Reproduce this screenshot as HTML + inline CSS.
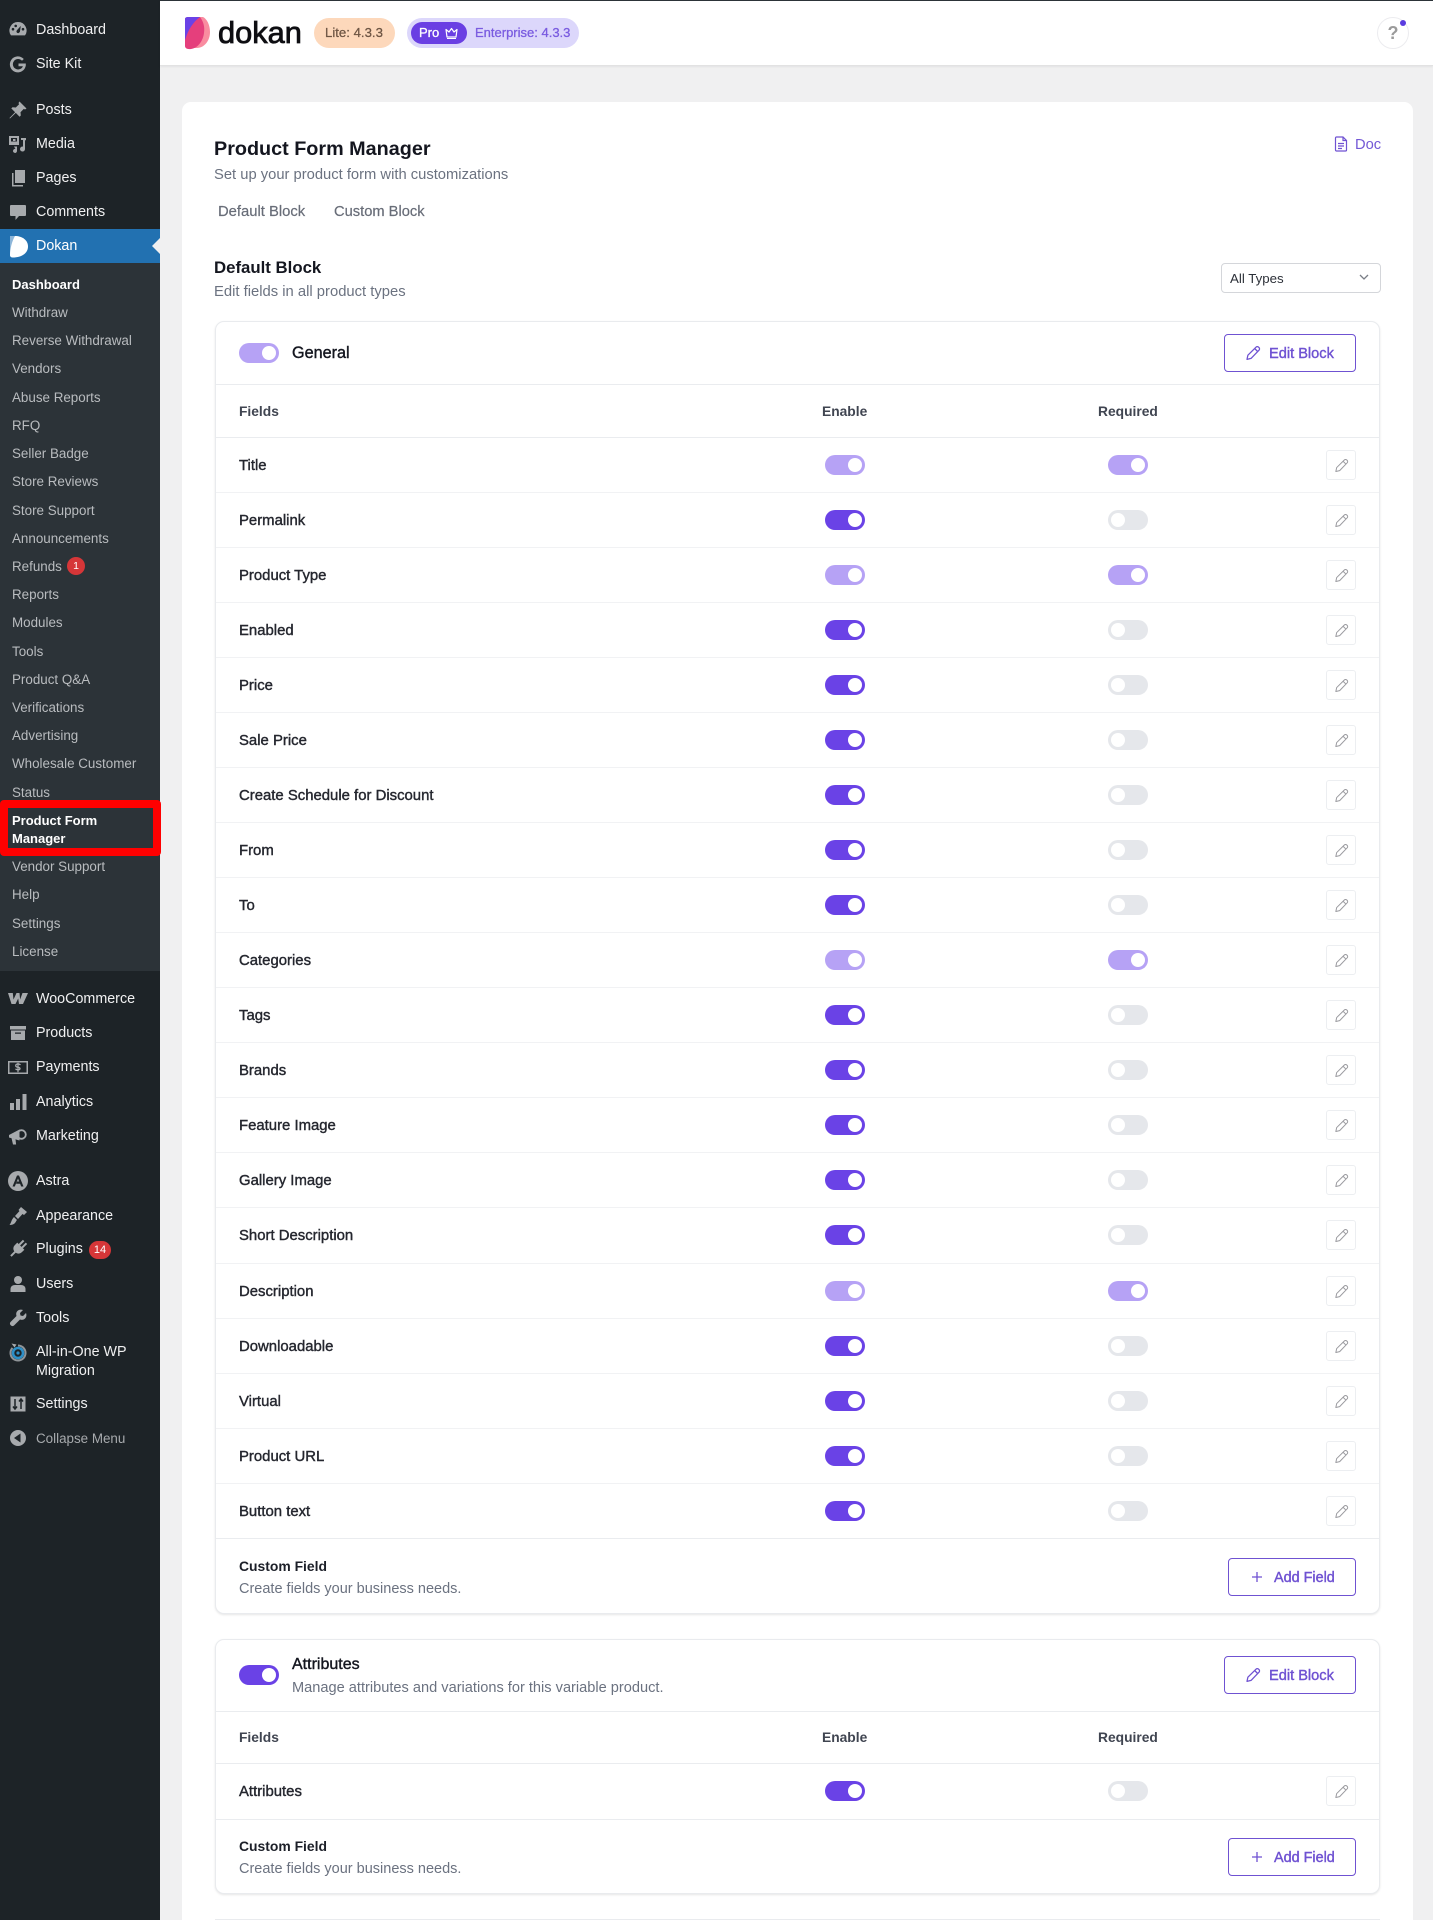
<!DOCTYPE html>
<html lang="en">
<head>
<meta charset="utf-8">
<title>Product Form Manager</title>
<style>
html,body{margin:0;padding:0;width:1433px;height:1920px;overflow:hidden}
body{background:#f0f0f1;font-family:"Liberation Sans",sans-serif;color:#1f2430}
#root{position:relative;width:1433px;height:1920px;overflow:hidden}
.x{position:absolute;white-space:nowrap;line-height:20px}
.bx{position:absolute;box-sizing:border-box}
#side{position:absolute;left:0;top:0;width:160px;height:1920px;background:#1d2327}
#sub{position:absolute;left:0;top:263px;width:160px;height:708px;background:#2c3338}
.m{position:absolute;left:36px;white-space:nowrap;line-height:21px;font-size:14.3px;color:#f0f0f1}
.s{position:absolute;left:12px;white-space:nowrap;line-height:21px;font-size:13.4px;color:#b9bcbf}
.s b{color:#fff}
.ic{position:absolute;left:8px;width:20px;height:20px;fill:#a7aaad}
.r{position:absolute;left:216px;width:1163px;height:55px;box-sizing:border-box;border-top:1px solid #f1f2f4}
.r span{position:absolute;left:23px;top:18px;line-height:20px;font-size:14.9px;color:#25272f;-webkit-text-stroke:.4px #25272f;white-space:nowrap}
.r i:nth-of-type(1){left:609px;top:17px}
.r i:nth-of-type(2){left:892px;top:17px}
.r em{position:absolute;left:1110px;top:12px;width:30px;height:30px;box-sizing:border-box;border:1px solid #eceef1;border-radius:3px}
.r em svg{position:absolute;left:6px;top:6px;width:17px;height:17px}
i.t{position:absolute;display:block;width:40px;height:20px;border-radius:10px}
i.t::after{content:"";position:absolute;top:3px;left:23px;width:14px;height:14px;border-radius:50%;background:#fff}
i.a{background:#6a42e6}
i.b{background:#b6a2f5}
i.c{background:#e5e7eb}
i.c::after{left:3px}
.card{position:absolute;left:215px;width:1165px;box-sizing:border-box;border:1px solid #e9ebee;border-radius:9px;background:#fff;box-shadow:0 1px 2px rgba(0,0,0,.1)}
.ln{position:absolute;left:216px;width:1163px;height:1px;background:#eaecef}
.btn{position:absolute;box-sizing:border-box;border:1.5px solid #6f52d2;border-radius:4px;background:#fff}
.pv{color:#6f52d2;font-size:14.6px;-webkit-text-stroke:.4px #6f52d2}
.fh{font-size:13.8px;font-weight:bold;color:#404551}
.cf{font-size:13.9px;font-weight:bold;color:#1c1f28}
.gr{font-size:14.5px;color:#6b7280}
</style>
</head>
<body>
<div id="root">
<svg width="0" height="0" style="position:absolute">
<symbol id="p" viewBox="0 0 24 24"><path d="M4 20.5l1.2-5.6L16 4.2a2.4 2.4 0 0 1 3.4 0l.6.6a2.4 2.4 0 0 1 0 3.4L9.4 19.2zM14.2 6l4 4" fill="none" stroke="#9a9a9f" stroke-width="1.4" stroke-linejoin="round"/></symbol>
<symbol id="q" viewBox="0 0 24 24"><path d="M4 20.5l1.2-5.6L16 4.2a2.4 2.4 0 0 1 3.4 0l.6.6a2.4 2.4 0 0 1 0 3.4L9.4 19.2zM14.2 6l4 4" fill="none" stroke="#6f52d2" stroke-width="1.7" stroke-linejoin="round"/></symbol>
</svg>

<!-- SIDEBAR -->
<div id="side"></div>
<div id="sub"></div>
<div class="bx" style="left:0;top:229px;width:160px;height:34px;background:#2271b1"></div>
<div class="bx" style="left:152px;top:238px;width:0;height:0;border-top:8px solid transparent;border-bottom:8px solid transparent;border-right:8px solid #f0f0f1"></div>

<svg class="ic" style="top:20px" viewBox="0 0 20 20"><path d="M10 2a8.500 8.500 0 0 0-7 13.400h14A8.500 8.500 0 0 0 10 2zM5 10.500a1.300 1.300 0 1 1 0-2.600 1.300 1.300 0 0 1 0 2.600zm2.700-3.300a1.300 1.300 0 1 1 0-2.600 1.300 1.300 0 0 1 0 2.600zM10.800 13a1.700 1.700 0 0 1-2-2.600l4-4.500-.9 6zM15 10.500a1.300 1.300 0 1 1 0-2.600 1.300 1.300 0 0 1 0 2.600z" fill-rule="evenodd"/></svg>
<svg class="ic" style="top:54px" viewBox="0 0 20 20"><path d="M15.800 5a8 8 0 1 0 2 6.500V9.500h-7.300v2.700h4.400A5.200 5.200 0 1 1 14 6.800z"/></svg>
<svg class="ic" style="top:100px" viewBox="0 0 20 20"><path d="M11.500 1.500l7 7-1.500 1-1.200-.6-3.300 3.300.3 3.300-1.200 1.200-3.800-3.800L2 18.500l-.5-.5 5.600-5.800L3.300 8.400l1.200-1.200 3.300.3 3.300-3.300-.6-1.200z"/></svg>
<svg class="ic" style="top:134px" viewBox="0 0 20 20"><path d="M1 2h10v9H1zM3 4v3.500h6V4zM5 5h2.500v2H5z" fill-rule="evenodd"/><path d="M13 4h5v2l-1 .5V15a2.500 2.500 0 1 1-2-2.400V6h-2zM6 12.500h3v4.500a2 2 0 1 1-1.500-2z"/></svg>
<svg class="ic" style="top:168px" viewBox="0 0 20 20"><path d="M7 2h10v13H7z"/><path d="M4 5h1.500v12H15v1.500H4z"/></svg>
<svg class="ic" style="top:202px" viewBox="0 0 20 20"><path d="M3 3h14a1 1 0 0 1 1 1v9a1 1 0 0 1-1 1h-6l-3.500 4v-4H3a1 1 0 0 1-1-1V4a1 1 0 0 1 1-1z"/></svg>
<svg class="ic" style="top:235px;left:9px;width:20px;height:23px" viewBox="0 0 20 23"><path d="M1 1h5l3 14-8 6z" fill="#8db6d9"/><path d="M6 1c7 0 13 4 13 10.500S13 22.500 3.500 22.500C1.500 22.500 1 21 1 20c0-6 2-14 5-19z" fill="#fff"/></svg>

<svg class="ic" style="top:989px" viewBox="0 0 20 20"><path d="M0 4h4.800l.7 6.500L8.500 4h3l.6 6.500L14.500 4H20l-5 11h-4l-.8-5.500L7.500 15h-4z"/></svg>
<svg class="ic" style="top:1023px" viewBox="0 0 20 20"><path d="M2 3h16v3.500H2zM3 7.500h14V17H3zM7 9.500v1.300h6V9.500z" fill-rule="evenodd"/></svg>
<svg class="ic" style="top:1057px" viewBox="0 0 20 20"><path d="M0 4h20v13H0zM1.500 5.500v10h17v-10z" fill-rule="evenodd"/><path d="M12.500 8c-.5-.6-1.400-1-2.500-1-1.400 0-2.300.7-2.300 1.700 0 2.200 4.300 1 4.300 2.900 0 .7-.8 1.200-2 1.200-1 0-2-.4-2.500-1" fill="none" stroke="#a7aaad" stroke-width="1.300"/><path d="M9.400 5.800h1.200v9.400H9.400z"/></svg>
<svg class="ic" style="top:1092px" viewBox="0 0 20 20"><path d="M2 11h4v7H2zM8 7h4v11H8zM14.500 2h4v16h-4z"/></svg>
<svg class="ic" style="top:1126px" viewBox="0 0 20 20"><path d="M1 9L11.500 3.500v11L1 11.500z"/><path d="M3.500 12l4 1.200.6 5.300H5z"/><circle cx="13.500" cy="8.500" r="4.300" fill="none" stroke="#a7aaad" stroke-width="1.800"/></svg>
<svg class="ic" style="top:1171px" viewBox="0 0 20 20"><path d="M10 0a10 10 0 1 0 0 20 10 10 0 0 0 0-20zM9 4.500h2l4.500 11h-2.300l-1.100-2.800H8l1-2.200h2.200L10 7.500 6.800 15.500H4.500z" fill-rule="evenodd"/></svg>
<svg class="ic" style="top:1206px" viewBox="0 0 20 20"><path d="M13 1l6 5-3 3-1.500-1L10 13 7 10l4.500-5-1-1zM6 11l3 3c-1 1-1 2-2.500 3.500-1.500 1.200-3.500 1.500-5 1.500 1-1.500 1.500-2.500 2-4s1.500-3 2.500-4z"/></svg>
<svg class="ic" style="top:1239px" viewBox="0 0 20 20"><g transform="rotate(45 10 10)"><path d="M7 0h2v6H7zM11 0h2v6h-2zM5 6h10v3.500c0 2.700-2 4.500-4 4.700V20H9v-5.800c-2-.2-4-2-4-4.700z"/></g></svg>
<svg class="ic" style="top:1274px" viewBox="0 0 20 20"><circle cx="10" cy="6" r="4"/><path d="M2.500 18v-3c0-2.500 2-4 4.500-4h6c2.500 0 4.500 1.500 4.500 4v3z"/></svg>
<svg class="ic" style="top:1308px" viewBox="0 0 20 20"><path d="M18 5l-3 3-2.500-.5L12 5l3-3c-2.500-1-5 0-6 1.500-1 1.300-1 3-.5 4.500L2.500 14a2.500 2.500 0 0 0 3.500 3.500L12 11.500c1.500.5 3.200.5 4.500-.5C18 10 19 7.500 18 5z"/></svg>
<svg class="ic" style="top:1342px" viewBox="0 0 20 20"><path d="M10 3.500a7.500 7.500 0 1 1-5.500 2.400" fill="none" stroke="#8f9498" stroke-width="2"/><path d="M3.500 1.500l5 1-2 3z"/><circle cx="10" cy="11" r="5" fill="none" stroke="#2d8fc7" stroke-width="2.600"/><circle cx="10" cy="11" r="1.600" fill="#2d8fc7"/></svg>
<svg class="ic" style="top:1394px" viewBox="0 0 20 20"><path d="M2.500 2.500h15v15h-15z"/><path d="M7 5v10M5 12.500L7 15l2-2.500M13 15V5M11 7.500L13 5l2 2.500" fill="none" stroke="#1d2327" stroke-width="1.500"/></svg>
<svg class="ic" style="top:1428px" viewBox="0 0 20 20"><path d="M10 2a8 8 0 1 0 0 16 8 8 0 0 0 0-16zm2.500 3.500v9L6 10z" fill-rule="evenodd"/></svg>

<div class="m" style="top:20px">Dashboard</div>
<div class="m" style="top:54px">Site Kit</div>
<div class="m" style="top:100px">Posts</div>
<div class="m" style="top:134px">Media</div>
<div class="m" style="top:168px">Pages</div>
<div class="m" style="top:202px">Comments</div>
<div class="m" style="top:236px;color:#fff">Dokan</div>

<div class="s" style="top:274px"><b style="font-size:13px">Dashboard</b></div>
<div class="s" style="top:302px">Withdraw</div>
<div class="s" style="top:330px">Reverse Withdrawal</div>
<div class="s" style="top:358px">Vendors</div>
<div class="s" style="top:387px">Abuse Reports</div>
<div class="s" style="top:415px">RFQ</div>
<div class="s" style="top:443px">Seller Badge</div>
<div class="s" style="top:471px">Store Reviews</div>
<div class="s" style="top:500px">Store Support</div>
<div class="s" style="top:528px">Announcements</div>
<div class="s" style="top:556px">Refunds</div>
<div class="bx" style="left:67px;top:557px;width:18px;height:18px;border-radius:50%;background:#d63638;color:#fff;font-size:10.500px;line-height:18px;text-align:center">1</div>
<div class="s" style="top:584px">Reports</div>
<div class="s" style="top:612px">Modules</div>
<div class="s" style="top:641px">Tools</div>
<div class="s" style="top:669px">Product Q&amp;A</div>
<div class="s" style="top:697px">Verifications</div>
<div class="s" style="top:725px">Advertising</div>
<div class="s" style="top:753px">Wholesale Customer</div>
<div class="s" style="top:782px">Status</div>
<div class="s" style="top:810px"><b style="font-size:13px">Product Form</b></div>
<div class="s" style="top:828px"><b style="font-size:13px">Manager</b></div>
<div class="bx" style="left:0;top:800px;width:161px;height:56px;border:8px solid #f00;border-radius:4px"></div>
<div class="s" style="top:856px">Vendor Support</div>
<div class="s" style="top:884px">Help</div>
<div class="s" style="top:913px">Settings</div>
<div class="s" style="top:941px">License</div>

<div class="m" style="top:989px">WooCommerce</div>
<div class="m" style="top:1023px">Products</div>
<div class="m" style="top:1057px">Payments</div>
<div class="m" style="top:1092px">Analytics</div>
<div class="m" style="top:1126px">Marketing</div>
<div class="m" style="top:1171px">Astra</div>
<div class="m" style="top:1206px">Appearance</div>
<div class="m" style="top:1239px">Plugins</div>
<div class="bx" style="left:89px;top:1241px;width:22px;height:18px;border-radius:9px;background:#d63638;color:#fff;font-size:11px;line-height:18px;text-align:center">14</div>
<div class="m" style="top:1274px">Users</div>
<div class="m" style="top:1308px">Tools</div>
<div class="m" style="top:1342px">All-in-One WP</div>
<div class="m" style="top:1361px">Migration</div>
<div class="m" style="top:1394px">Settings</div>
<div class="m" style="top:1428px;color:#a7aaad;font-size:13.4px">Collapse Menu</div>

<!-- TOP BAR -->
<div class="bx" style="left:160px;top:0;width:1273px;height:66px;background:#fff;border-top:1px solid #2c3338;border-bottom:1px solid #e2e2e2;box-shadow:0 1px 2px rgba(0,0,0,.06)"></div>
<svg style="position:absolute;left:183px;top:16px" width="28" height="34" viewBox="0 0 28 34">
<path d="M2 3c0-1.500 1.500-2 3-2 9 0 15 0 15 0 4 2 7 8 7 15 0 9-6 16-13 16-6 0-12 1-12-3z" fill="#f98ca0"/>
<path d="M2 3c0-1.500 1.500-2 3-2h12l-4 16-11 7z" fill="#6a42e6"/>
<path d="M17 1c3 4 5 9 4 16-1 8-6 15-13 16-4 .5-6-1-6-3V24c3-10 8-18 15-23z" fill="#e53f7c"/>
</svg>
<div class="x" style="left:218px;top:12px;line-height:42px;font-size:30.800px;color:#0e0e12;-webkit-text-stroke:.8px #0e0e12">dokan</div>
<div class="bx" style="left:314px;top:18px;width:81px;height:30px;border-radius:15px;background:#fdd8bb"></div>
<div class="x" style="left:325px;top:23px;font-size:13.200px;color:#6d5443;-webkit-text-stroke:.25px #6d5443">Lite: 4.3.3</div>
<div class="bx" style="left:407px;top:18px;width:172px;height:30px;border-radius:15px;background:#dcd7fb"></div>
<div class="bx" style="left:411px;top:22px;width:56px;height:22px;border-radius:11px;background:#6a3fe3"></div>
<div class="x" style="left:419px;top:23px;font-size:13px;color:#fff;-webkit-text-stroke:.3px #fff">Pro</div>
<svg style="position:absolute;left:444px;top:26px" width="15" height="14" viewBox="0 0 15 14"><path d="M2 3.500l3 2.500 2.500-3.500L10 6l3-2.500-1 7.500H3z" fill="none" stroke="#fff" stroke-width="1.200" stroke-linejoin="round"/><path d="M3 12.500h9" stroke="#fff" stroke-width="1"/></svg>
<div class="x" style="left:475px;top:23px;font-size:13px;color:#7a5ce0;-webkit-text-stroke:.3px #7a5ce0">Enterprise: 4.3.3</div>

<div class="bx" style="left:1377px;top:17px;width:32px;height:32px;border-radius:50%;border:1px solid #ececef;background:#fff;color:#9b9b9b;font-weight:bold;font-size:18px;line-height:30px;text-align:center">?</div>
<div class="bx" style="left:1400px;top:20px;width:6px;height:6px;border-radius:50%;background:#5a3ce0"></div>

<!-- MAIN PANEL -->
<div class="bx" style="left:182px;top:102px;width:1231px;height:1818px;background:#fff;border-radius:9px 9px 0 0"></div>
<div class="x" style="left:214px;top:139px;font-size:19.800px;font-weight:bold;color:#14161f">Product Form Manager</div>
<div class="x" style="left:214px;top:165px;font-size:14.750px;color:#6b7280">Set up your product form with customizations</div>
<div class="x" style="left:218px;top:202px;font-size:14.800px;color:#686d78;-webkit-text-stroke:.2px #686d78">Default Block</div>
<div class="x" style="left:334px;top:202px;font-size:14.700px;color:#686d78;-webkit-text-stroke:.2px #686d78">Custom Block</div>
<svg style="position:absolute;left:1334px;top:136px" width="14" height="16" viewBox="0 0 14 16"><path d="M1.500 2a1 1 0 0 1 1-1H9l3.500 3.500V14a1 1 0 0 1-1 1h-9a1 1 0 0 1-1-1zM9 1v3.500h3.500M4 7.500h6M4 10h6M4 12.500h4" fill="none" stroke="#6f52d2" stroke-width="1.200"/></svg>
<div class="x" style="left:1355px;top:135px;font-size:14.700px;color:#7358d6">Doc</div>
<div class="x" style="left:214px;top:258px;font-size:16.800px;font-weight:bold;color:#14161f">Default Block</div>
<div class="x" style="left:214px;top:282px;font-size:14.800px;color:#6b7280">Edit fields in all product types</div>
<div class="bx" style="left:1221px;top:263px;width:160px;height:30px;border:1px solid #d4d6da;border-radius:4px;background:#fff"></div>
<div class="x" style="left:1230px;top:268px;line-height:21px;font-size:13.300px;color:#2c3038">All Types</div>
<svg style="position:absolute;left:1359px;top:274px" width="10" height="7" viewBox="0 0 10 7"><path d="M1 1l4 4 4-4" fill="none" stroke="#7a7e86" stroke-width="1.300"/></svg>

<!-- GENERAL CARD -->
<div class="card" style="top:321px;height:1293px"></div>
<i class="t b" style="left:239px;top:343px"></i>
<div class="x" style="left:292px;top:343px;line-height:21px;font-size:16.200px;color:#14161f;-webkit-text-stroke:.4px #14161f">General</div>
<div class="btn" style="left:1224px;top:334px;width:132px;height:38px"></div>
<svg style="position:absolute;left:1244px;top:344px" width="18" height="18"><use href="#q"/></svg>
<div class="x pv" style="left:1269px;top:344px">Edit Block</div>
<div class="ln" style="top:384px"></div>
<div class="x fh" style="left:239px;top:402px">Fields</div>
<div class="x fh" style="left:822px;top:402px">Enable</div>
<div class="x fh" style="left:1098px;top:402px">Required</div>

<div class="r" style="top:437px;border-top-color:#eaecef"><span>Title</span><i class="t b"></i><i class="t b"></i><em><svg><use href="#p"/></svg></em></div>
<div class="r" style="top:492px"><span>Permalink</span><i class="t a"></i><i class="t c"></i><em><svg><use href="#p"/></svg></em></div>
<div class="r" style="top:547px"><span>Product Type</span><i class="t b"></i><i class="t b"></i><em><svg><use href="#p"/></svg></em></div>
<div class="r" style="top:602px"><span>Enabled</span><i class="t a"></i><i class="t c"></i><em><svg><use href="#p"/></svg></em></div>
<div class="r" style="top:657px"><span>Price</span><i class="t a"></i><i class="t c"></i><em><svg><use href="#p"/></svg></em></div>
<div class="r" style="top:712px"><span>Sale Price</span><i class="t a"></i><i class="t c"></i><em><svg><use href="#p"/></svg></em></div>
<div class="r" style="top:767px"><span>Create Schedule for Discount</span><i class="t a"></i><i class="t c"></i><em><svg><use href="#p"/></svg></em></div>
<div class="r" style="top:822px"><span>From</span><i class="t a"></i><i class="t c"></i><em><svg><use href="#p"/></svg></em></div>
<div class="r" style="top:877px"><span>To</span><i class="t a"></i><i class="t c"></i><em><svg><use href="#p"/></svg></em></div>
<div class="r" style="top:932px"><span>Categories</span><i class="t b"></i><i class="t b"></i><em><svg><use href="#p"/></svg></em></div>
<div class="r" style="top:987px"><span>Tags</span><i class="t a"></i><i class="t c"></i><em><svg><use href="#p"/></svg></em></div>
<div class="r" style="top:1042px"><span>Brands</span><i class="t a"></i><i class="t c"></i><em><svg><use href="#p"/></svg></em></div>
<div class="r" style="top:1097px"><span>Feature Image</span><i class="t a"></i><i class="t c"></i><em><svg><use href="#p"/></svg></em></div>
<div class="r" style="top:1152px"><span>Gallery Image</span><i class="t a"></i><i class="t c"></i><em><svg><use href="#p"/></svg></em></div>
<div class="r" style="top:1207px"><span>Short Description</span><i class="t a"></i><i class="t c"></i><em><svg><use href="#p"/></svg></em></div>
<div class="r" style="top:1263px"><span>Description</span><i class="t b"></i><i class="t b"></i><em><svg><use href="#p"/></svg></em></div>
<div class="r" style="top:1318px"><span>Downloadable</span><i class="t a"></i><i class="t c"></i><em><svg><use href="#p"/></svg></em></div>
<div class="r" style="top:1373px"><span>Virtual</span><i class="t a"></i><i class="t c"></i><em><svg><use href="#p"/></svg></em></div>
<div class="r" style="top:1428px"><span>Product URL</span><i class="t a"></i><i class="t c"></i><em><svg><use href="#p"/></svg></em></div>
<div class="r" style="top:1483px"><span>Button text</span><i class="t a"></i><i class="t c"></i><em><svg><use href="#p"/></svg></em></div>

<div class="ln" style="top:1538px"></div>
<div class="x cf" style="left:239px;top:1556px">Custom Field</div>
<div class="x gr" style="left:239px;top:1579px">Create fields your business needs.</div>
<div class="btn" style="left:1228px;top:1558px;width:128px;height:38px"></div>
<svg style="position:absolute;left:1251px;top:1571px" width="12" height="12" viewBox="0 0 12 12"><path d="M6 1v10M1 6h10" stroke="#6f52d2" stroke-width="1.300"/></svg>
<div class="x pv" style="left:1274px;top:1568px;font-size:14.400px">Add Field</div>

<!-- ATTRIBUTES CARD -->
<div class="card" style="top:1639px;height:255px"></div>
<i class="t a" style="left:239px;top:1665px"></i>
<div class="x" style="left:292px;top:1655px;font-size:16px;color:#14161f;-webkit-text-stroke:.4px #14161f">Attributes</div>
<div class="x gr" style="left:292px;top:1678px;line-height:21px;font-size:14.600px">Manage attributes and variations for this variable product.</div>
<div class="btn" style="left:1224px;top:1656px;width:132px;height:38px"></div>
<svg style="position:absolute;left:1244px;top:1666px" width="18" height="18"><use href="#q"/></svg>
<div class="x pv" style="left:1269px;top:1666px">Edit Block</div>
<div class="ln" style="top:1711px"></div>
<div class="x fh" style="left:239px;top:1728px">Fields</div>
<div class="x fh" style="left:822px;top:1728px">Enable</div>
<div class="x fh" style="left:1098px;top:1728px">Required</div>
<div class="r" style="top:1763px;border-top-color:#eaecef"><span>Attributes</span><i class="t a"></i><i class="t c"></i><em><svg><use href="#p"/></svg></em></div>
<div class="ln" style="top:1819px"></div>
<div class="x cf" style="left:239px;top:1836px">Custom Field</div>
<div class="x gr" style="left:239px;top:1859px">Create fields your business needs.</div>
<div class="btn" style="left:1228px;top:1838px;width:128px;height:38px"></div>
<svg style="position:absolute;left:1251px;top:1851px" width="12" height="12" viewBox="0 0 12 12"><path d="M6 1v10M1 6h10" stroke="#6f52d2" stroke-width="1.300"/></svg>
<div class="x pv" style="left:1274px;top:1848px;font-size:14.400px">Add Field</div>

<div class="bx" style="left:215px;top:1919px;width:1165px;height:1px;background:#e9ebee"></div>
</div>
</body>
</html>
